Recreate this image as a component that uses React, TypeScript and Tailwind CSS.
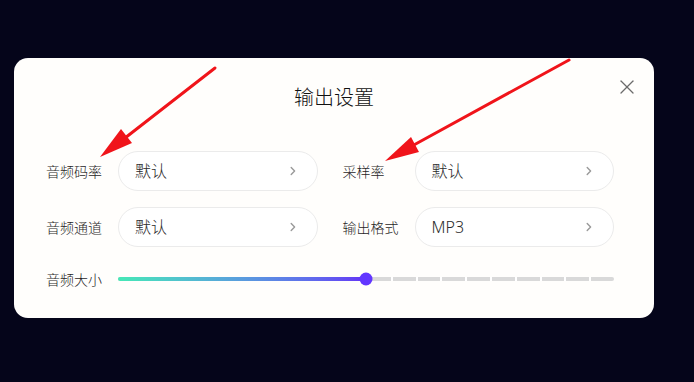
import { X } from "lucide-react";

const font = { fontFamily: '"Noto Sans", "Noto Sans CJK SC", sans-serif' };

const Chevron = () => (
  <svg width="6" height="10" viewBox="0 0 6 10" fill="none" className="shrink-0">
    <path d="M1.2 1.5 L4.6 5 L1.2 8.5" stroke="#9a9a9a" strokeWidth="1.4" strokeLinecap="round" strokeLinejoin="round" />
  </svg>
);

const Field = ({ label, value }: { label: string; value: string }) => (
  <div className="flex items-center">
    <span className="w-[72px] shrink-0 text-[14px] font-light text-[#1f1f1f]">{label}</span>
    <button
      type="button"
      className="flex h-[40px] w-[200px] items-center justify-between rounded-full border border-[#ebebeb] bg-white pl-[16px] pr-[21px] text-[16px] font-light text-[#2a2a2a]"
    >
      <span>{value}</span>
      <Chevron />
    </button>
  </div>
);

export default function App() {
  const ticks = Array.from({ length: 19 }, (_, i) => (i + 1) * 5);
  const value = 50;

  return (
    <main className="relative h-[382px] w-[694px] overflow-hidden bg-[#05051a] pt-[58px] pl-[14px]" style={font}>
      <section className="relative w-[640px] rounded-[14px] bg-[#fffefc] pt-[26px] pb-[29px] pl-[32px] pr-[40px]">
        <h1 className="text-center text-[20px] leading-[28px] font-light text-[#111] pl-[8px]">输出设置</h1>
        <button type="button" title="关闭" className="absolute top-[17px] right-[15px] text-[#6b6b6b]">
          <X size={24} strokeWidth={1.3} />
        </button>

        <div className="mt-[39px] grid grid-cols-2 gap-x-[25px] gap-y-[16px]">
          <Field label="音频码率" value="默认" />
          <Field label="采样率" value="默认" />
          <Field label="音频通道" value="默认" />
          <Field label="输出格式" value="MP3" />
        </div>

        <div className="mt-[22px] flex h-[20px] items-center">
          <span className="w-[72px] shrink-0 text-[14px] font-light text-[#1f1f1f]">音频大小</span>
          <div className="relative h-[4px] flex-1 rounded-full bg-[#d9d9d9]">
            {ticks.map((t) => (
              <span key={t} className="absolute top-0 h-[4px] w-[2px] bg-white" style={{ left: `${t}%` }} />
            ))}
            <div
              className="absolute left-0 top-0 h-[4px] rounded-full bg-gradient-to-r from-[#46e8b6] to-[#6432f5]"
              style={{ width: `${value}%` }}
            />
            <span
              className="absolute top-1/2 h-[13px] w-[13px] -translate-x-1/2 -translate-y-1/2 rounded-full bg-[#6236ff]"
              style={{ left: `${value}%` }}
            />
          </div>
        </div>
      </section>

      <svg className="pointer-events-none absolute left-0 top-0" width="694" height="382">
        <line x1="215" y1="68" x2="125" y2="138" stroke="#f0141a" strokeWidth="3" strokeLinecap="round" />
        <polygon points="100,157 132,143 121,129" fill="#f0141a" />
        <line x1="569" y1="60" x2="412" y2="146" stroke="#f0141a" strokeWidth="3" strokeLinecap="round" />
        <polygon points="385,161 419,152 411,137" fill="#f0141a" />
      </svg>
    </main>
  );
}
